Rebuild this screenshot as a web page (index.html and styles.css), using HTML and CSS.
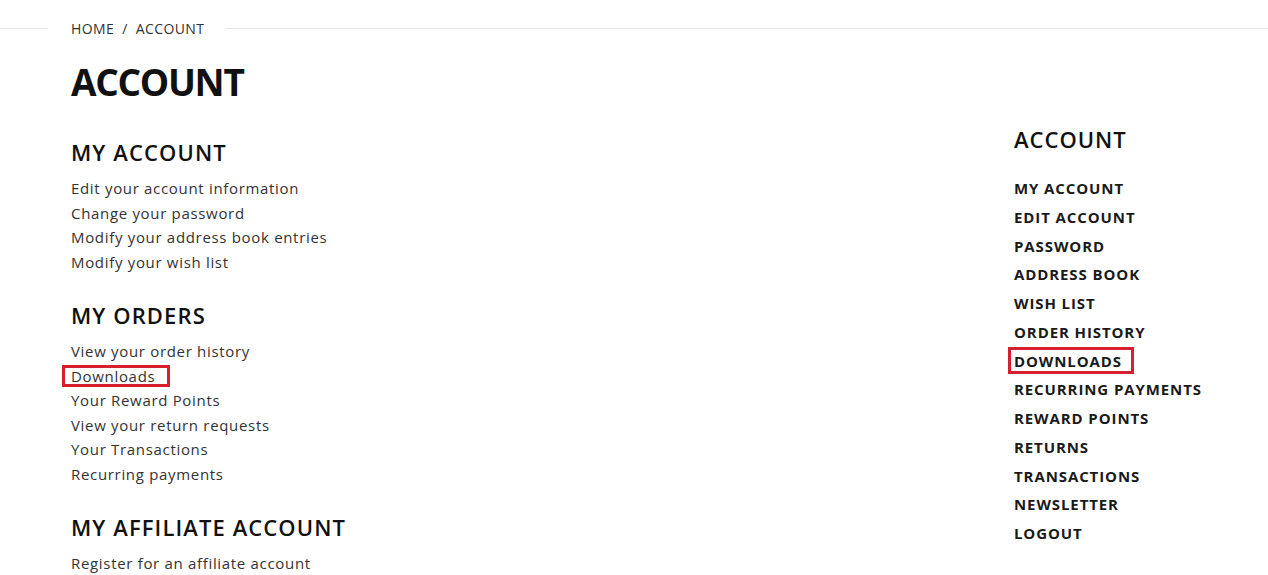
FILE: index.html
```html
<!DOCTYPE html>
<html lang="en">
<head>
<meta charset="utf-8">
<title>Account</title>
<link rel="stylesheet" href="styles.css">
</head>
<body>
<div class="breadcrumb-bar">
  <ul class="breadcrumb">
    <li><a href="#">Home</a></li>
    <li class="sep">/</li>
    <li><a href="#">Account</a></li>
  </ul>
</div>
<div class="page">
  <h1 class="title">Account</h1>
  <div class="row">
    <div class="content">
      <h2 class="sec-title">My Account</h2>
      <ul class="links">
        <li><a href="#">Edit your account information</a></li>
        <li><a href="#">Change your password</a></li>
        <li><a href="#">Modify your address book entries</a></li>
        <li><a href="#">Modify your wish list</a></li>
      </ul>
      <h2 class="sec-title">My Orders</h2>
      <ul class="links">
        <li><a href="#">View your order history</a></li>
        <li><a href="#" class="marked">Downloads</a></li>
        <li><a href="#">Your Reward Points</a></li>
        <li><a href="#">View your return requests</a></li>
        <li><a href="#">Your Transactions</a></li>
        <li><a href="#">Recurring payments</a></li>
      </ul>
      <h2 class="sec-title">My Affiliate Account</h2>
      <ul class="links">
        <li><a href="#">Register for an affiliate account</a></li>
      </ul>
    </div>
    <aside class="sidebar">
      <h3 class="side-title">Account</h3>
      <ul class="side-links">
        <li><a href="#">My Account</a></li>
        <li><a href="#">Edit Account</a></li>
        <li><a href="#">Password</a></li>
        <li><a href="#">Address Book</a></li>
        <li><a href="#">Wish List</a></li>
        <li><a href="#">Order History</a></li>
        <li><a href="#" class="marked side-marked">Downloads</a></li>
        <li><a href="#">Recurring payments</a></li>
        <li><a href="#">Reward Points</a></li>
        <li><a href="#">Returns</a></li>
        <li><a href="#">Transactions</a></li>
        <li><a href="#">Newsletter</a></li>
        <li><a href="#">Logout</a></li>
      </ul>
    </aside>
  </div>
</div>
</body>
</html>
```
FILE: styles.css
```css
* { box-sizing: border-box; }
html, body { margin: 0; padding: 0; background: #fff; }
body {
  font-family: "Open Sans", "Liberation Sans", sans-serif;
  color: #222;
}
a { color: inherit; text-decoration: none; }
ul { list-style: none; margin: 0; padding: 0; }

.breadcrumb-bar {
  height: 57px;
  display: flex;
  align-items: center;
  background: linear-gradient(#e6e6e6, #e6e6e6) 0 28px / 100% 1px no-repeat;
}
.breadcrumb {
  display: flex;
  margin-left: 48px;
  padding: 0 22px 0 23px;
  background: #fff;
  font-size: 14px;
  text-transform: uppercase;
  color: #333;
  letter-spacing: 0.4px;
  line-height: 20px;
}
.breadcrumb .sep { padding: 0 8px; }

.page { padding-left: 71px; }
.title {
  margin: 1px 0 0;
  font-size: 37px;
  line-height: 48px;
  font-weight: 700;
  text-transform: uppercase;
  letter-spacing: -1.3px;
  color: #111;
}
.row { display: flex; }
.content { flex: 1; }
.sec-title {
  margin: 31px 0 9px;
  font-size: 22px;
  line-height: 30px;
  font-weight: 600;
  text-transform: uppercase;
  letter-spacing: 1.1px;
  color: #111;
}
.links + .sec-title { margin-top: 26px; }
.links li {
  font-size: 15px;
  line-height: 24.5px;
  letter-spacing: 0.68px;
  color: #333;
}
.marked { position: relative; }
.marked::after {
  content: "";
  position: absolute;
  left: -9px;
  right: -15px;
  top: -1px;
  bottom: -1px;
  border: 3px solid #d5212e;
}
.sidebar { width: 254px; }
.side-title {
  margin: 18px 0 0;
  font-size: 22px;
  line-height: 30px;
  font-weight: 600;
  text-transform: uppercase;
  letter-spacing: 1px;
  color: #111;
}
.side-links { margin-top: 20px; }
.side-links li {
  font-size: 15px;
  line-height: 28.75px;
  font-weight: 700;
  text-transform: uppercase;
  letter-spacing: 0.9px;
  color: #1a1a1a;
}
.side-marked::after {
  left: -6px;
  right: -12px;
  top: -4px;
  bottom: -3px;
}
```
